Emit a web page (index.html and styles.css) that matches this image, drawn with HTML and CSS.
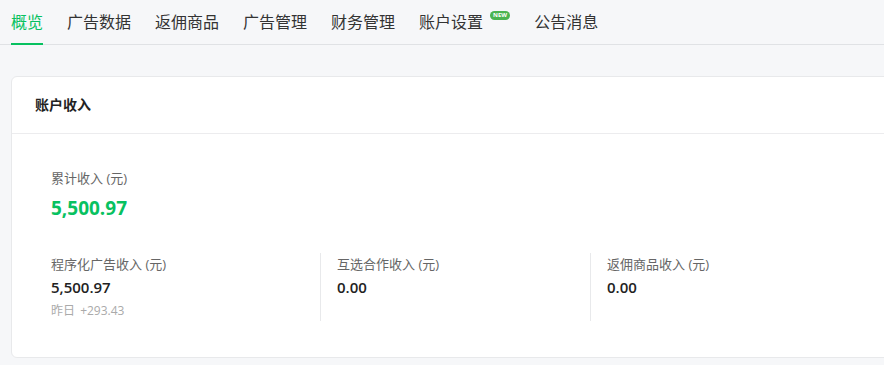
FILE: index.html
```html
<!DOCTYPE html>
<html lang="zh-CN">
<head>
    <meta charset="UTF-8">
    <title>概览</title>
    <link rel="stylesheet" href="styles.css">
</head>
<body>
    <div class="tabs">
        <a class="tab active">概览</a>
        <a class="tab">广告数据</a>
        <a class="tab">返佣商品</a>
        <a class="tab">广告管理</a>
        <a class="tab">财务管理</a>
        <a class="tab">账户设置<span class="badge">NEW</span></a>
        <a class="tab">公告消息</a>
    </div>
    <div class="card">
        <div class="card-header">账户收入</div>
        <div class="card-body">
            <div class="total">
                <div class="label">累计收入 (元)</div>
                <div class="total-value">5,500.97</div>
            </div>
            <div class="cols">
                <div class="col">
                    <div class="label">程序化广告收入 (元)</div>
                    <div class="value">5,500.97</div>
                    <div class="sub">昨日 <span>+293.43</span></div>
                </div>
                <div class="col">
                    <div class="label">互选合作收入 (元)</div>
                    <div class="value">0.00</div>
                </div>
                <div class="col">
                    <div class="label">返佣商品收入 (元)</div>
                    <div class="value">0.00</div>
                </div>
            </div>
        </div>
    </div>
</body>
</html>
```

FILE: styles.css
```css
body {
    margin: 0;
    padding: 0;
    font-family: "Open Sans", "Noto Sans CJK SC", sans-serif;
    background: #f6f7f9;
    color: #222;
    overflow: hidden;
}

.tabs {
    display: flex;
    gap: 24px;
    padding: 0 11px;
    height: 44px;
    border-bottom: 1px solid #e0e2e5;
}

.tab {
    display: flex;
    align-items: center;
    font-size: 16px;
    color: #333;
    border-bottom: 2px solid transparent;
    margin-bottom: -1px;
    padding-bottom: 1px;
    white-space: nowrap;
}

.tab.active {
    color: #07c160;
    border-bottom-color: #07c160;
}

.badge {
    margin-left: 7px;
    margin-top: -12px;
    background: #4bb450;
    color: white;
    font-size: 6px;
    font-weight: bold;
    line-height: 9px;
    padding: 0 3px;
    border-radius: 5px;
}

.card {
    margin: 31px 0 0 11px;
    width: 900px;
    height: 282px;
    background: white;
    border: 1px solid #e8e9eb;
    border-radius: 6px;
    box-sizing: border-box;
}

.card-header {
    height: 56px;
    line-height: 56px;
    padding-left: 23px;
    font-size: 14px;
    font-weight: bold;
    color: #222;
    border-bottom: 1px solid #ececee;
}

.card-body {
    padding: 34px 0 0 39px;
}

.label {
    font-size: 13px;
    color: #666;
    line-height: 20px;
}

.total-value {
    margin-top: 8px;
    font-size: 19px;
    font-weight: bold;
    color: #07c160;
    line-height: 24px;
}

.cols {
    display: flex;
    margin-top: 33px;
}

.col {
    width: 270px;
    height: 68px;
    box-sizing: border-box;
    padding-top: 1px;
}

.col:first-child {
    width: 269px;
}

.col + .col {
    border-left: 1px solid #e8e9eb;
    padding-left: 16px;
}

.value {
    margin-top: 2px;
    font-size: 15px;
    font-weight: 600;
    color: #222;
    line-height: 22px;
}

.sub {
    margin-top: 3px;
    font-size: 12px;
    color: #aaa;
    line-height: 20px;
}

.sub span {
    margin-left: 2px;
}
```
